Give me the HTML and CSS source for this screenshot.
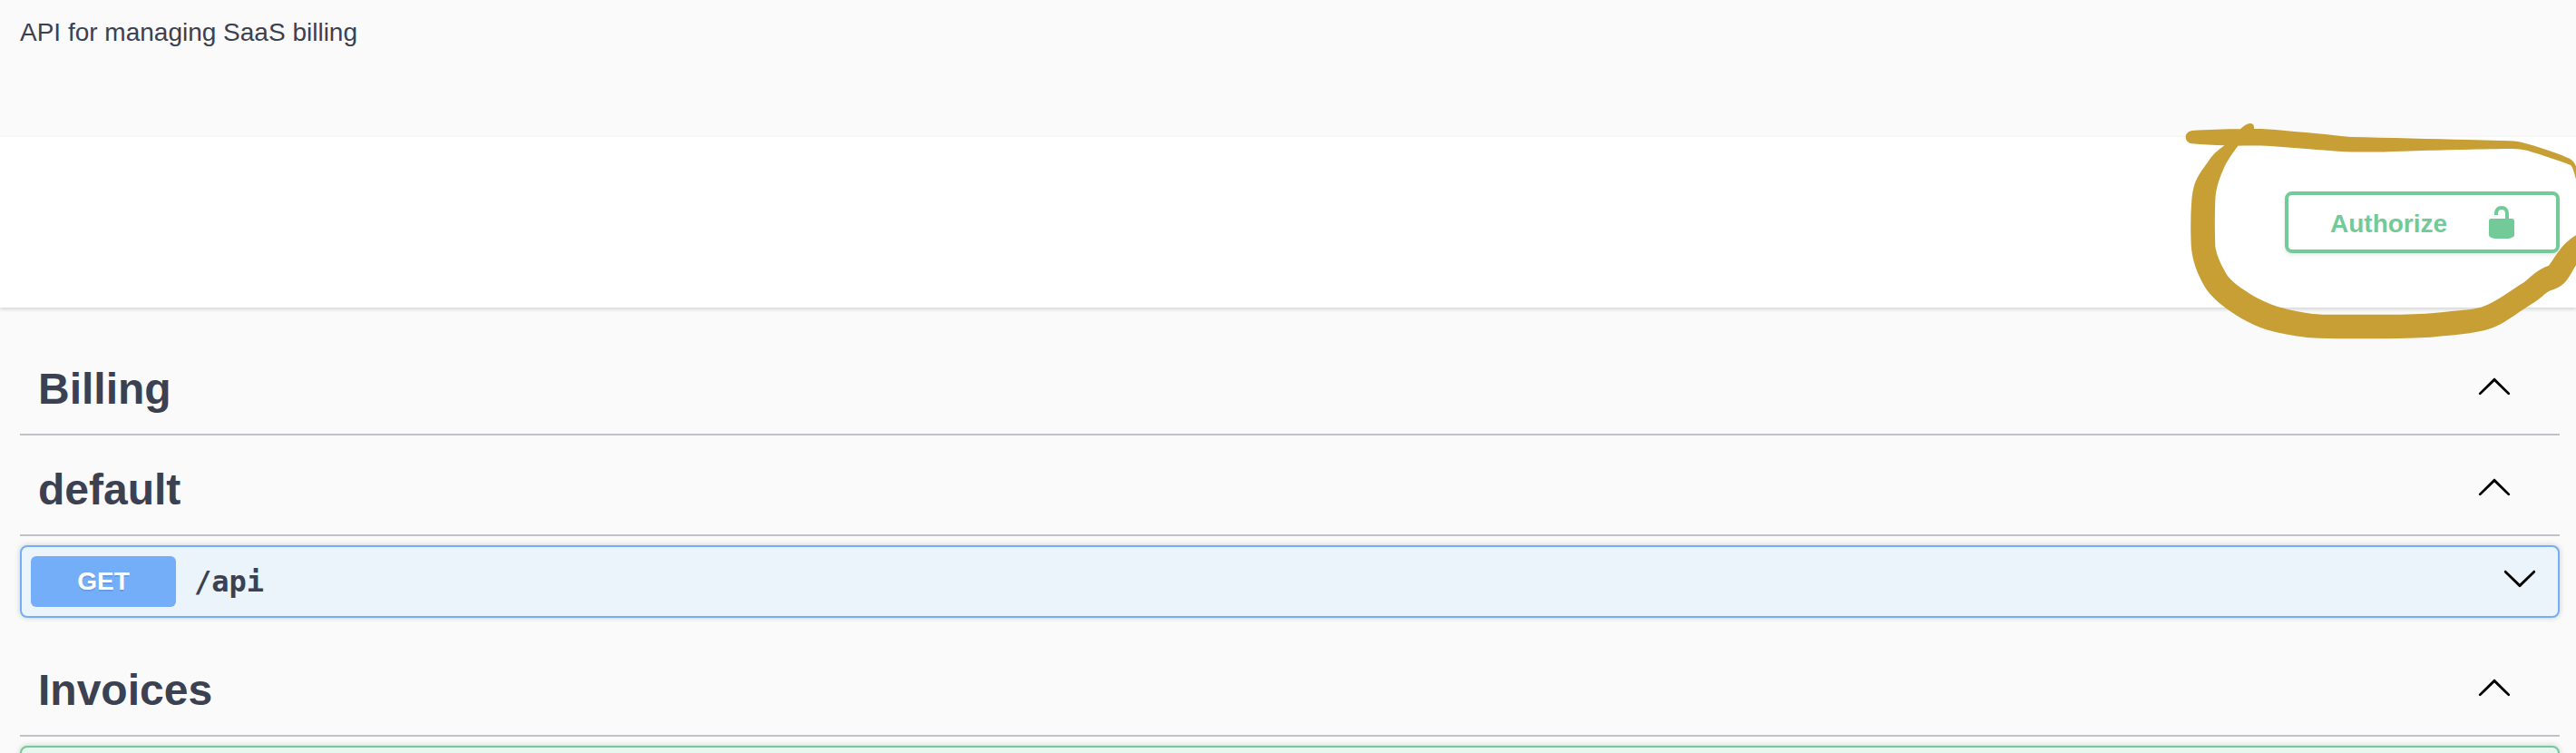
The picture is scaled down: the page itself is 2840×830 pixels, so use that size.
FILE: index.html
```html
<!DOCTYPE html>
<html lang="en">
<head>
<meta charset="utf-8">
<title>Billing API</title>
<link rel="stylesheet" href="styles.css">
</head>
<body>
<svg class="defs" width="0" height="0">
  <symbol id="arrow-up" viewBox="0 0 20 20"><path d="M17.418 14.908c.272.268.709.268.979 0s.271-.701 0-.969l-7.908-7.83c-.27-.268-.707-.268-.979 0l-7.908 7.83c-.27.268-.27.701 0 .969s.709.268.979 0L10 7.767z"/></symbol>
  <symbol id="arrow-down" viewBox="0 0 20 20"><path d="M17.418 6.109c.272-.268.709-.268.979 0s.271.701 0 .969l-7.908 7.83c-.27.268-.707.268-.979 0l-7.908-7.83c-.27-.268-.27-.701 0-.969s.709-.268.979 0L10 13.25z"/></symbol>
</svg>
<main class="page">
  <section class="info"><p class="description">API for managing SaaS billing</p></section>
  <section class="scheme">
    <button class="authorize">
      <span>Authorize</span>
      <svg class="icon" viewBox="0 0 20 20"><path d="M15.8 8H14V5.6C14 2.703 12.665 1 10 1 7.334 1 6 2.703 6 5.6V6h2v-.801C8 3.754 8.797 3 10 3c1.203 0 2 .754 2 2.199V8H4c-.553 0-1 .646-1 1.199V17c0 .549.428 1.139.951 1.307l1.197.387C5.672 18.861 6.55 19 7.1 19h5.8c.549 0 1.428-.139 1.951-.307l1.196-.387c.524-.167.953-.757.953-1.306V9.199C17 8.646 16.352 8 15.8 8z"/></svg>
    </button>
  </section>
  <section class="tags">
    <h3 class="tag"><span>Billing</span><svg class="icon"><use href="#arrow-up"/></svg></h3>
    <h3 class="tag"><span>default</span><svg class="icon"><use href="#arrow-up"/></svg></h3>
    <div class="operation get">
      <span class="method">GET</span>
      <span class="path">/api</span>
      <svg class="icon"><use href="#arrow-down"/></svg>
    </div>
    <h3 class="tag"><span>Invoices</span><svg class="icon"><use href="#arrow-up"/></svg></h3>
    <div class="operation post"></div>
  </section>
  <svg class="annotation" viewBox="0 0 1320 810">
    <path d="M50 72C100 69 160 67 210 67C222 54 234 47 244 48C253 49 256 56 255 66C285 66 320 68 350 71C420 77 500 86 575 93C700 95 850 100 960 102L1100 106C1120 107 1135 109 1150 113C1205 128 1260 147 1300 165C1314 174 1319 186 1326 205V255C1317 225 1313 199 1303 187C1260 169 1200 151 1160 138C1140 133 1120 131 1100 132C1000 133 850 137 750 140C690 142 620 144 555 142C470 137 390 128 310 123C275 121 235 121 202 122C190 139 171 163 158 190C141 229 129 260 127 300C125 350 125 400 127 455C131 485 148 520 168 553C188 578 230 606 270 628C300 643 330 655 370 664C410 672 440 679 480 680H740C800 679 850 675 890 671C940 667 980 664 1010 655C1060 636 1100 602 1150 572C1178 549 1190 533 1230 518C1250 494 1268 447 1326 414V508C1310 530 1302 552 1285 572C1268 590 1250 595 1230 603C1208 618 1197 632 1170 647C1120 678 1080 712 1038 726C980 745 910 748 840 755C770 759 700 760 630 760C560 760 500 761 440 757C390 751 340 744 295 730C240 711 190 682 145 646C115 620 98 602 82 570C62 530 50 495 47 450C45 400 45 350 49 300C52 270 57 250 66 231C76 211 92 190 108 167C127 142 143 132 158 121C120 120 85 118 50 115C22 110 22 77 50 72Z"/>
  </svg>
</main>
</body>
</html>
```
FILE: styles.css
```css
* { box-sizing: border-box; }
body {
  margin: 0;
  background: #fafafa;
  color: #3b4151;
  font-family: "Liberation Sans", Arial, sans-serif;
}
.defs { position: absolute; }
.page {
  position: relative;
  height: 830px;
  overflow: hidden;
}
.icon {
  display: block;
  flex: none;
  width: 40px;
  height: 40px;
}
.info {
  height: 151px;
  padding: 20px 22px;
}
.description {
  margin: 0;
  font-size: 28px;
  line-height: 32px;
}
.scheme {
  display: flex;
  align-items: flex-start;
  justify-content: flex-end;
  height: 188px;
  padding: 60px 18px;
  background: #fff;
  box-shadow: 0 2px 4px rgba(0, 0, 0, .15);
}
.authorize {
  display: flex;
  align-items: center;
  justify-content: space-between;
  width: 303px;
  height: 68px;
  padding: 0 40px 0 46px;
  border: 4px solid #72ca98;
  border-radius: 8px;
  background: transparent;
  box-shadow: 0 2px 4px rgba(0, 0, 0, .1);
  color: #72ca98;
  font: bold 28px/32px "Liberation Sans", Arial, sans-serif;
}
.authorize span { padding-top: 4px; }
.authorize .icon { fill: currentColor; }
.tags { padding: 30px 18px 0 22px; }
.tag {
  display: flex;
  align-items: center;
  justify-content: space-between;
  height: 111px;
  margin: 0;
  padding: 3px 52px 0 20px;
  border-bottom: 2px solid #c1c1c8;
  font-size: 48px;
  line-height: 56px;
}
.tag span { padding-top: 7px; }
.operation {
  display: flex;
  align-items: center;
  height: 80px;
  margin: 10px 0 20px;
  padding: 0 22px 0 10px;
  border: 2px solid;
  border-radius: 8px;
  box-shadow: 0 0 6px rgba(0, 0, 0, .19);
}
.get {
  border-color: #74adf8;
  background: #ebf3fb;
}
.post {
  border-color: #72ca98;
  background: #e8f6f0;
}
.method {
  width: 160px;
  height: 56px;
  border-radius: 6px;
  background: #74adf8;
  color: #fff;
  font-size: 28px;
  font-weight: bold;
  line-height: 56px;
  text-align: center;
  text-shadow: 0 2px 0 rgba(0, 0, 0, .1);
}
.path {
  flex: 1;
  padding-left: 20px;
  font: bold 32px/40px "DejaVu Sans Mono", monospace;
}
.operation .icon { margin-bottom: 8px; }
.annotation {
  position: absolute;
  top: 120px;
  left: 2400px;
  width: 440px;
  height: 270px;
  fill: #c89f35;
  pointer-events: none;
}
```
